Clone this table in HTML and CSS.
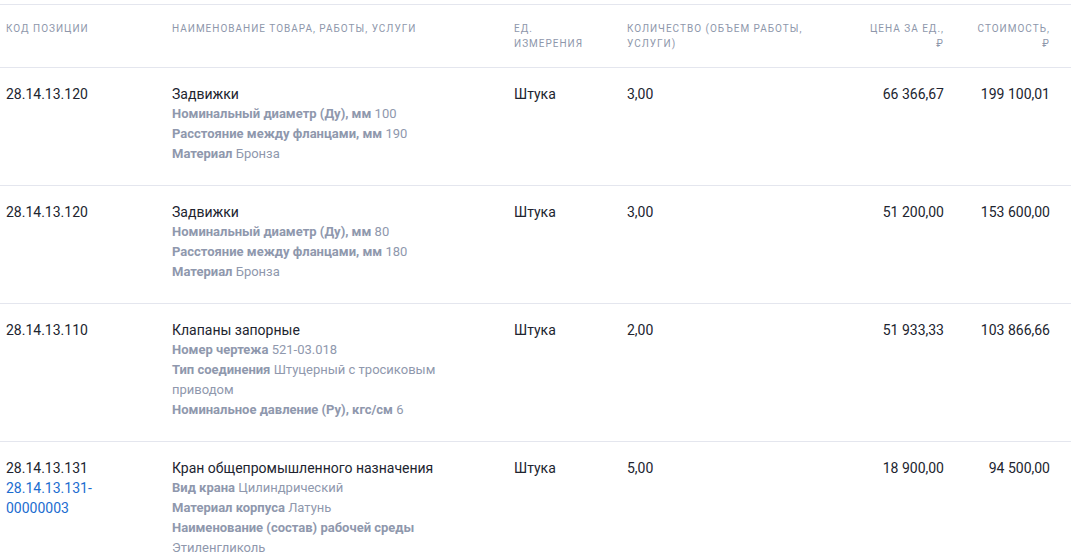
FILE: index.html
```html
<!DOCTYPE html>
<html lang="ru">
<head>
<meta charset="utf-8">
<title>Позиции</title>
<link rel="stylesheet" href="styles.css">
</head>
<body>
<div class="table">
  <div class="row head">
    <div class="cell c1">Код позиции</div>
    <div class="cell c2">Наименование товара, работы, услуги</div>
    <div class="cell c3">Ед. измерения</div>
    <div class="cell c4">Количество (объем работы, услуги)</div>
    <div class="cell c5">Цена за ед., ₽</div>
    <div class="cell c6">Стоимость, ₽</div>
  </div>

  <div class="row">
    <div class="cell c1">28.14.13.120</div>
    <div class="cell c2">
      <div class="name">Задвижки</div>
      <div class="attr"><b>Номинальный диаметр (Ду), мм</b> 100</div>
      <div class="attr"><b>Расстояние между фланцами, мм</b> 190</div>
      <div class="attr"><b>Материал</b> Бронза</div>
    </div>
    <div class="cell c3">Штука</div>
    <div class="cell c4">3,00</div>
    <div class="cell c5">66 366,67</div>
    <div class="cell c6">199 100,01</div>
  </div>

  <div class="row">
    <div class="cell c1">28.14.13.120</div>
    <div class="cell c2">
      <div class="name">Задвижки</div>
      <div class="attr"><b>Номинальный диаметр (Ду), мм</b> 80</div>
      <div class="attr"><b>Расстояние между фланцами, мм</b> 180</div>
      <div class="attr"><b>Материал</b> Бронза</div>
    </div>
    <div class="cell c3">Штука</div>
    <div class="cell c4">3,00</div>
    <div class="cell c5">51 200,00</div>
    <div class="cell c6">153 600,00</div>
  </div>

  <div class="row">
    <div class="cell c1">28.14.13.110</div>
    <div class="cell c2">
      <div class="name">Клапаны запорные</div>
      <div class="attr"><b>Номер чертежа</b> 521-03.018</div>
      <div class="attr"><b>Тип соединения</b> Штуцерный с тросиковым приводом</div>
      <div class="attr"><b>Номинальное давление (Ру), кгс/см</b> 6</div>
    </div>
    <div class="cell c3">Штука</div>
    <div class="cell c4">2,00</div>
    <div class="cell c5">51 933,33</div>
    <div class="cell c6">103 866,66</div>
  </div>

  <div class="row">
    <div class="cell c1">
      <div>28.14.13.131</div>
      <a class="link" href="#">28.14.13.131-00000003</a>
    </div>
    <div class="cell c2">
      <div class="name">Кран общепромышленного назначения</div>
      <div class="attr"><b>Вид крана</b> Цилиндрический</div>
      <div class="attr"><b>Материал корпуса</b> Латунь</div>
      <div class="attr"><b>Наименование (состав) рабочей среды</b> Этиленгликоль</div>
    </div>
    <div class="cell c3">Штука</div>
    <div class="cell c4">5,00</div>
    <div class="cell c5">18 900,00</div>
    <div class="cell c6">94 500,00</div>
  </div>
</div>
</body>
</html>
```
FILE: styles.css
```css
* { box-sizing: border-box; }
html, body { margin: 0; padding: 0; background: #fff; }
body {
  padding-top: 4px;
  font-family: Roboto, "Liberation Sans", Arial, sans-serif;
  font-size: 14px;
  line-height: 20px;
  color: #21242f;
}
.table {
  border-top: 1px solid #e4e6ee;
}
.row {
  display: grid;
  grid-template-columns: 172px 342px 113px 189px 128px 127px;
  border-bottom: 1px solid #e4e6ee;
}
.cell {
  padding: 16px 10px 21px 0;
  overflow-wrap: break-word;
}
.head .cell {
  padding-top: 16px;
  padding-bottom: 16px;
  font-size: 10px;
  line-height: 15px;
  letter-spacing: 1px;
  text-transform: uppercase;
  color: #8e97ab;
}
.c1 { padding-left: 6px; padding-right: 26px; }
.c2 { padding-right: 40px; }
.c3 { padding-right: 30px; }
.c5 { text-align: right; padding-left: 48px; padding-right: 0; }
.c6 { text-align: right; padding-left: 26px; padding-right: 21px; }
.head .c3 { padding-right: 30px; }
.head .c5 { padding-right: 0; }
.head .c6 { padding-right: 21px; }
.attr {
  font-size: 13px;
  line-height: 20px;
  color: #8f98ad;
}
.attr b { font-weight: 700; }
.link {
  color: #1c6dd0;
  text-decoration: none;
}
```
